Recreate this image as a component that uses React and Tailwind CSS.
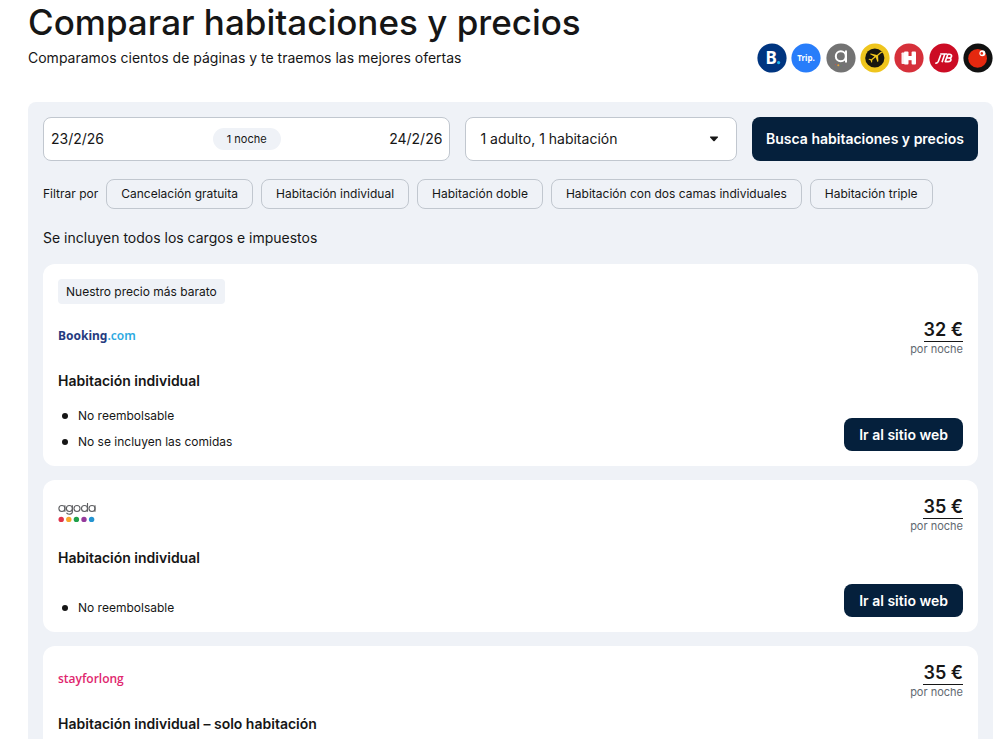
import { useState } from "react";

const filters = [
  "Cancelación gratuita",
  "Habitación individual",
  "Habitación doble",
  "Habitación con dos camas individuales",
  "Habitación triple",
];

function Partners() {
  return (
    <div className="flex w-[236px] shrink-0 justify-between">
      <svg className="size-[30px]" viewBox="0 0 30 30" role="img" aria-label="Booking">
        <circle cx="15" cy="15" r="14.6" fill="#003580" />
        <text x="8.5" y="21" fontSize="17" fontWeight="700" fill="#fff" fontFamily="Noto Sans, sans-serif">B</text>
        <circle cx="21.6" cy="19.6" r="1.6" fill="#19b5f1" />
      </svg>
      <svg className="size-[30px]" viewBox="0 0 30 30" role="img" aria-label="Trip">
        <circle cx="15" cy="15" r="14.6" fill="#287dfa" />
        <text x="15" y="18" fontSize="8" fontWeight="700" fill="#fff" textAnchor="middle" fontFamily="Noto Sans, sans-serif">Trip.</text>
      </svg>
      <svg className="size-[30px]" viewBox="0 0 30 30" role="img" aria-label="Agoda">
        <circle cx="15" cy="15" r="14.6" fill="#737373" />
        <circle cx="14.8" cy="13.2" r="5" fill="none" stroke="#fff" strokeWidth="2" />
        <path d="M20 8.3v10.5" stroke="#fff" strokeWidth="2" strokeLinecap="round" />
        <circle cx="9.5" cy="21.5" r="0.6" fill="#c2554d" />
        <circle cx="12.3" cy="22.3" r="1" fill="#e8a33a" />
        <circle cx="15" cy="22.7" r="0.6" fill="#5f8567" />
        <circle cx="18" cy="22.3" r="0.6" fill="#7c6a8a" />
      </svg>
      <svg className="size-[30px]" viewBox="0 0 30 30" role="img" aria-label="Expedia">
        <circle cx="15" cy="15" r="14.6" fill="#efc51d" />
        <circle cx="14.8" cy="15" r="9.6" fill="#16150f" />
        <path d="M23 8.800c-.9-.7-2.500.2-3.400 1L17 12l-6.100-1.500-1.100.6 4.700 2.300-3.200 2.800-2.200-.4-.7.500 2.300 1.100.7 2.300.7-.5.200-2.200 3.400-2.700 1.700 4.800 1-.8-.3-5.600 2.600-2.100c1.200-.9 2.300-1.200 2.300-1.800z" fill="#efc51d" />
      </svg>
      <svg className="size-[30px]" viewBox="0 0 30 30" role="img" aria-label="Hoteles.com">
        <circle cx="15" cy="15" r="14.6" fill="#d6303a" />
        <g fill="#fff">
          <rect x="7.500" y="9.500" width="3" height="11.500" rx=".8" opacity=".92" />
          <rect x="10" y="8.500" width="4.500" height="13" rx="1" />
          <rect x="17.600" y="8.500" width="4.400" height="13" rx="1" />
          <rect x="14" y="13" width="4" height="4.200" />
        </g>
      </svg>
      <svg className="size-[30px]" viewBox="0 0 30 30" role="img" aria-label="JTB">
        <circle cx="15" cy="15" r="14.6" fill="#cc0c24" />
        <path
          d="M6.300 20q2.200.6 3.100-1.700l2.300-6.300M11.200 11h7.300M15.600 11.500l-2.600 7.800M18.900 11.300l-2.700 7.300h2.900c3.700 0 3.600-3.500 1-3.600 3.300-.2 3.300-3.700.3-3.700h-1.500M18 15h2.100"
          fill="none"
          stroke="#fff"
          strokeWidth="1.6"
          strokeLinejoin="round"
        />
      </svg>
      <svg className="size-[30px]" viewBox="0 0 30 30" role="img" aria-label="Destinia">
        <circle cx="15" cy="15" r="14.6" fill="#111" />
        <circle cx="14.6" cy="15.4" r="9.4" fill="#e5280f" />
        <circle cx="19.4" cy="10.200" r="3" fill="#fff" />
        <circle cx="18.800" cy="10.400" r="1.3" fill="#e5280f" />
      </svg>
    </div>
  );
}

function BookingLogo() {
  return (
    <span className="font-['Noto_Sans',sans-serif] text-xs font-bold text-[#253b80]">
      Booking<span className="font-semibold text-[#2caae1]">.com</span>
    </span>
  );
}

function AgodaLogo() {
  return (
    <svg className="h-[22px] w-[38px]" viewBox="0 0 38 22" role="img" aria-label="agoda">
      <g fill="none" stroke="#5e5f62" strokeWidth="1.1">
        <circle cx="3.9" cy="6.5" r="3" />
        <path d="M6.900 3.200v6.500" />
        <circle cx="11.4" cy="6.5" r="3" />
        <path d="M14.400 3.200v6.500c0 3-5 3.200-5.900 1" />
        <circle cx="19" cy="6.5" r="3" />
        <circle cx="26.5" cy="6.5" r="3" />
        <path d="M29.500 1v8.700" />
        <circle cx="34" cy="6.5" r="3" />
        <path d="M37 3.200v6.500" />
      </g>
      <circle cx="3.2" cy="17.4" r="2.7" fill="#e0344a" />
      <circle cx="10.8" cy="17.4" r="2.7" fill="#f9a72b" />
      <circle cx="18.4" cy="17.4" r="2.7" fill="#1fa049" />
      <circle cx="26" cy="17.4" r="2.7" fill="#953a9c" />
      <circle cx="33.6" cy="17.4" r="2.7" fill="#2494d1" />
    </svg>
  );
}

function StayforlongLogo() {
  return <span className="font-['Open_Sans',sans-serif] text-xs font-semibold text-[#e0266e]">stayforlong</span>;
}

const offers = [
  {
    badge: "Nuestro precio más barato",
    Logo: BookingLogo,
    room: "Habitación individual",
    price: "32 €",
    details: ["No reembolsable", "No se incluyen las comidas"],
  },
  { Logo: AgodaLogo, room: "Habitación individual", price: "35 €", details: ["No reembolsable"] },
  { Logo: StayforlongLogo, room: "Habitación individual – solo habitación", price: "35 €", last: true },
];

function Offer({ badge, Logo, room, price, details, last }) {
  return (
    <article className={last ? "flex-1 rounded-t-xl bg-white p-[15px]" : "shrink-0 rounded-xl bg-white p-[15px]"}>
      {badge && (
        <p className="mb-[14px] w-fit rounded-sm bg-[#eff2f7] px-2 text-xs leading-[25px]">{badge}</p>
      )}
      <div className="flex min-h-[122px] justify-between">
        <div className="flex flex-col">
          <div className="flex h-9 items-center">
            <Logo />
          </div>
          <h2 className="mt-[18px] text-sm leading-[18px] font-semibold">{room}</h2>
          {details && (
            <ul className="mt-auto flex flex-col gap-2 pt-[17px] text-xs leading-[18px]">
              {details.map((d) => (
                <li key={d} className="flex items-center gap-[10px] pl-1">
                  <span className="size-[6px] rounded-full bg-[#161616]" />
                  {d}
                </li>
              ))}
            </ul>
          )}
        </div>
        <div className="flex flex-col items-end">
          <p className="border-b border-[#161616] text-lg leading-[23px] font-semibold">{price}</p>
          <p className="text-[11px] leading-[14px] text-[#626971]">por noche</p>
          {!last && (
            <button className="mt-auto h-[33px] rounded-lg bg-[#05203c] px-[15px] text-sm font-semibold text-white">
              Ir al sitio web
            </button>
          )}
        </div>
      </div>
    </article>
  );
}

export default function App() {
  const [active, setActive] = useState(null);
  return (
    <main className="flex h-screen flex-col overflow-hidden bg-white pr-[7px] pl-7 font-[Inter,sans-serif] text-[#161616]">
      <header className="flex shrink-0 items-end justify-between pb-[29px]">
        <div className="pb-[5px]">
          <h1 className="text-[35px] leading-[44px] font-medium">Comparar habitaciones y precios</h1>
          <p className="mt-1 text-sm leading-5">
            Comparamos cientos de páginas y te traemos las mejores ofertas
          </p>
        </div>
        <Partners />
      </header>

      <section className="flex min-h-0 flex-1 flex-col rounded-t-lg bg-[#eff2f7] px-[15px] pt-[15px]">
        <form
          className="grid h-11 shrink-0 grid-cols-[3fr_2fr_226px] gap-[15px] text-sm"
          onSubmit={(e) => e.preventDefault()}
        >
          <div className="flex min-w-0 items-center justify-between rounded-lg border border-[#c1c7cf] bg-white px-[7px]">
            <input aria-label="Entrada" defaultValue="23/2/26" className="w-20 bg-transparent outline-none" />
            <span className="rounded-full bg-[#eff2f7] px-[14px] text-[11px] leading-[22px]">1 noche</span>
            <input aria-label="Salida" defaultValue="24/2/26" className="w-20 bg-transparent text-right outline-none" />
          </div>
          <div className="relative min-w-0">
            <select
              aria-label="Huéspedes y habitaciones"
              className="size-full appearance-none rounded-lg border border-[#c1c7cf] bg-white px-[14px] outline-none"
            >
              <option>1 adulto, 1 habitación</option>
            </select>
            <svg className="pointer-events-none absolute top-[19px] right-[18px] h-[6px] w-[10px]" viewBox="0 0 10 6">
              <path d="M1.500.5h7q1 0 .3.900L5.700 5q-.7.700-1.400 0L1.200 1.400Q.5.500 1.500.5z" fill="#161616" />
            </svg>
          </div>
          <button className="rounded-lg bg-[#05203c] text-sm font-semibold whitespace-nowrap text-white">
            Busca habitaciones y precios
          </button>
        </form>

        <div className="mt-[18px] flex shrink-0 items-center gap-2 text-xs whitespace-nowrap">
          <span>Filtrar por</span>
          {filters.map((f) => (
            <button
              key={f}
              aria-pressed={active === f}
              onClick={() => setActive(active === f ? null : f)}
              className="h-[30px] rounded-lg border border-[#c1c7cf] px-[14px]"
            >
              {f}
            </button>
          ))}
        </div>

        <p className="mt-[19px] text-sm leading-5">Se incluyen todos los cargos e impuestos</p>

        <div className="mt-4 flex min-h-0 flex-1 flex-col gap-[14px]">
          {offers.map((o, i) => (
            <Offer key={i} {...o} />
          ))}
        </div>
      </section>
    </main>
  );
}
